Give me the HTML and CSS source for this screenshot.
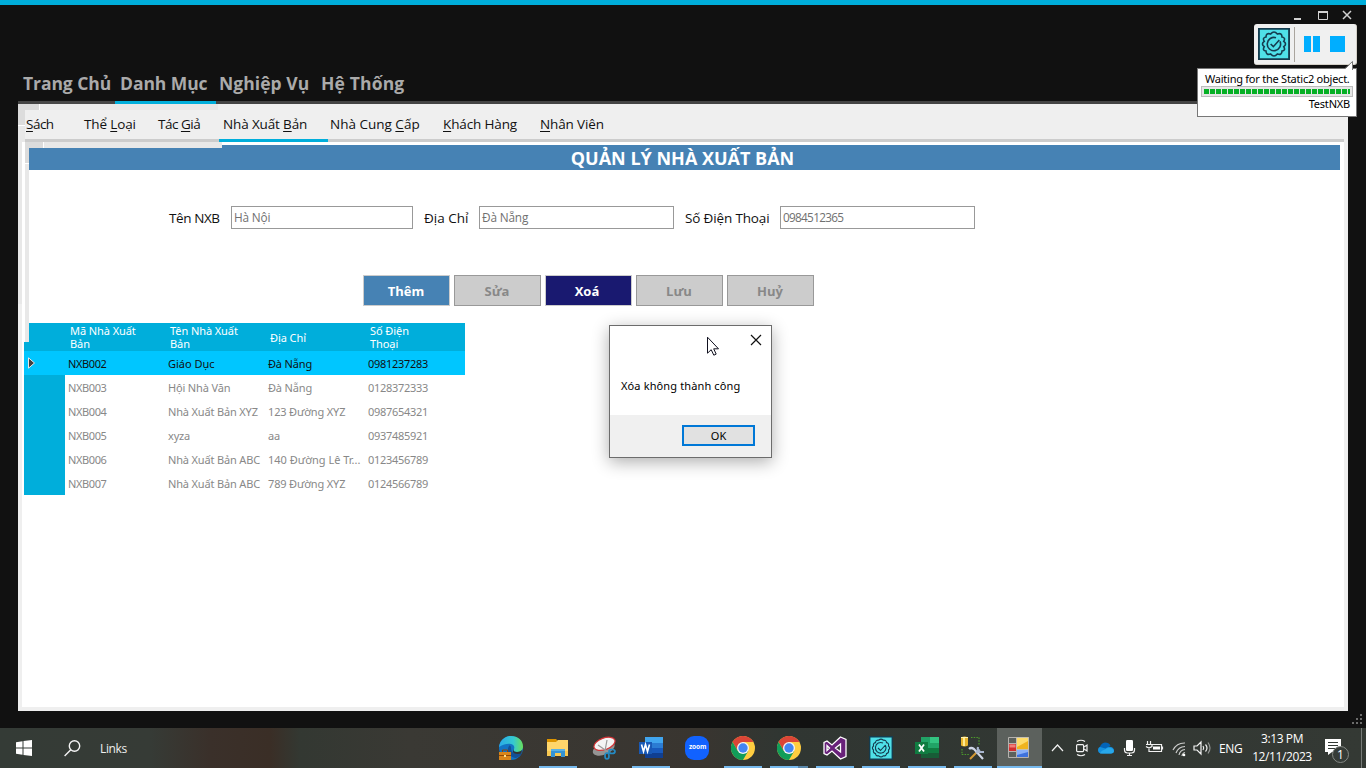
FILE: index.html
```html
<!DOCTYPE html>
<html lang="vi">
<head>
<meta charset="utf-8">
<title>Quản lý nhà xuất bản</title>
<link rel="stylesheet" href="styles.css">
</head>
<body>
<div class="desktop">
  <div class="app">
    <div class="window-controls">
      <svg width="62" height="12" viewBox="0 0 62 12" fill="none" stroke="#d2d2d2">
        <path d="M1 10h7" stroke-width="2"/>
        <path d="M25.500 3v7.500h9V3" stroke-width="1"/><path d="M25 3h10" stroke-width="2"/>
        <path d="M50 2l8 8M58 2l-8 8" stroke-width="1.500"/>
      </svg>
    </div>
    <nav class="main-tabs">
      <span>Trang Chủ</span><span class="on">Danh Mục</span><span class="third">Nghiệp Vụ</span><span class="fourth">Hệ Thống</span>
    </nav>
    <main class="page">
      <div class="ghost ghost-outer"></div>
      <div class="ghost ghost-inner"></div>
      <nav class="sub-tabs">
        <span class="tight"><u>S</u>ách</span><span>Thể <u>L</u>oại</span><span class="tight">Tác <u>G</u>iả</span><span class="on">Nhà Xuất <u>B</u>ản</span><span>Nhà Cung <u>C</u>ấp</span><span><u>K</u>hách Hàng</span><span><u>N</u>hân Viên</span>
      </nav>
      <section class="content">
        <div class="ghost ghost-title"></div>
        <h1><span>QUẢN LÝ NHÀ XUẤT BẢN</span></h1>
        <div class="form">
          <label class="l1">Tên NXB</label><div class="field f1">Hà Nội</div>
          <label class="l2">Địa Chỉ</label><div class="field f2">Đà Nẵng</div>
          <label class="l3">Số Điện Thoại</label><div class="field f3"><span class="phone">0984512365</span></div>
        </div>
        <div class="actions">
          <div class="btn add">Thêm</div><div class="btn">Sửa</div><div class="btn del">Xoá</div><div class="btn">Lưu</div><div class="btn">Huỷ</div>
        </div>
        <div class="grid">
          <div class="row head"><i></i><b>Mã Nhà Xuất<br>Bản</b><b>Tên Nhà Xuất<br>Bản</b><b>Địa Chỉ</b><b>Số Điện<br>Thoại</b></div>
          <div class="row sel"><i><svg width="9" height="13" viewBox="0 0 9 13"><path d="M1.500 .8v10.400L7.500 6z" fill="#414141" stroke="#e8e8e8"/></svg></i><span>NXB002</span><span class="wide">Giáo Dục</span><span>Đà Nẵng</span><span>0981237283</span></div>
          <div class="row"><i></i><span>NXB003</span><span>Hội Nhà Văn</span><span>Đà Nẵng</span><span>0128372333</span></div>
          <div class="row"><i></i><span>NXB004</span><span>Nhà Xuất Bản XYZ</span><span>123 Đường XYZ</span><span>0987654321</span></div>
          <div class="row"><i></i><span>NXB005</span><span>xyza</span><span>aa</span><span>0937485921</span></div>
          <div class="row"><i></i><span>NXB006</span><span>Nhà Xuất Bản ABC</span><span class="full">140 Đường Lê Tr...</span><span>0123456789</span></div>
          <div class="row"><i></i><span>NXB007</span><span>Nhà Xuất Bản ABC</span><span>789 Đường XYZ</span><span>0124566789</span></div>
        </div>
      </section>
    </main>
    <svg class="grip" width="12" height="12" viewBox="0 0 12 12" fill="#6b6b6b"><path d="M8 0h2v2H8zM4 4h2v2H4zM8 4h2v2H8zM0 8h2v2H0zM4 8h2v2H4zM8 8h2v2H8z"/></svg>
  </div>

  <footer class="taskbar">
    <svg class="start" width="16" height="16" viewBox="0 0 16 16" fill="#fff"><path d="M0 2.200L6.500 1.300V7.500H0zM7.500 1.100L16 0V7.500H7.500zM0 8.500H6.500V14.700L0 13.800zM7.500 8.500H16V16L7.500 14.900z"/></svg>
    <svg class="search" width="17" height="17" viewBox="0 0 17 17" fill="none" stroke="#f4f4f4" stroke-width="1.400"><circle cx="10.500" cy="6" r="5.200"/><path d="M6.800 9.700L.6 16"/></svg>
    <span class="links">Links</span>
    <div class="apps">
      <div class="task edge"><svg viewBox="0 0 24 24"><defs><linearGradient id="eg"><stop offset="0" stop-color="#2aa9e8"/><stop offset=".6" stop-color="#35c9d0"/><stop offset="1" stop-color="#69e05a"/></linearGradient></defs><circle cx="12" cy="12" r="12" fill="#1273c4"/><path d="M0 11C1 4 6 0 12 0c7 0 12 4.500 12 10.500 0 4-3 5.500-6 5.500-3 0-4-1-3-3 2-5-6-8-15-2z" fill="url(#eg)"/><path d="M15 13c-1 2 0 3 3 3 2 0 4-1 5-2l-1 5c-3 1-7 0-8-3 0-1 0-2 1-3z" fill="#343330"/><path d="M10 10c-3 5 0 11 7 12 3-1 5-3 6-5-5 2-11 1-11-5 0-2-1-3-2-2z" fill="#145095"/><path d="M0 16h12v8H0z" fill="#d88519"/><path d="M3.500 16v-2h5v2M0 19.500h12" fill="none" stroke="#8d4706"/><path d="M5 19h2v2H5z" fill="#ffe08a"/></svg></div>
      <div class="task run"><svg viewBox="0 0 24 24"><path d="M1 3h9l2 2v3H1z" fill="#dd9400"/><path d="M1 6h9l2-2h10v16H1z" fill="#ffd66b"/><path d="M1 15h21v5H1z" fill="#f8c851"/><path d="M5 21v-8h14v8h-4v-4H9v4z" fill="#3493d4"/><path d="M5 13h14v2H5z" fill="#59b1e5"/></svg></div>
      <div class="task snip"><svg viewBox="0 0 24 24"><ellipse cx="11.500" cy="12.500" rx="11.500" ry="6" transform="rotate(-22 12 12)" fill="#949494"/><ellipse cx="12.500" cy="8" rx="11" ry="5.800" transform="rotate(-20 12 8)" fill="#f4f4f4" stroke="#d43437" stroke-width="1.200"/><path d="M6 9l10 7M15 4l-2 11" stroke="#999" stroke-width="1.200"/><g fill="none" stroke="#238bc5" stroke-width="1.700"><ellipse cx="20" cy="15.500" rx="3" ry="2"/><ellipse cx="15" cy="20" rx="2" ry="3"/></g></svg></div>
      <div class="task run"><svg viewBox="0 0 24 24"><path d="M6 1h18v6H6z" fill="#41a5ee"/><path d="M6 7h18v5H6z" fill="#2b7cd3"/><path d="M6 12h18v5H6z" fill="#185abd"/><path d="M6 17h18v5H6z" fill="#103f91"/><path d="M0 6h13v12H0z" fill="#1959b5"/><path d="M2.500 8.500l2 7 2-7 2 7 2-7" fill="none" stroke="#fff" stroke-width="1.600"/></svg></div>
      <div class="task"><svg viewBox="0 0 24 24"><rect width="24" height="24" rx="9" fill="#1162ff"/></svg><em>zoom</em></div>
      <div class="task run"><svg viewBox="0 0 24 24"><circle cx="12" cy="12" r="12" fill="#ffcd40"/><path d="M1.600 6A12 12 0 0 1 22.400 6H12L6.800 15z" fill="#db4537"/><path d="M1.600 6A12 12 0 0 0 12 24l5.200-9H6.800z" fill="#119d59"/><circle cx="12" cy="12" r="6" fill="#f4f4f4"/><circle cx="12" cy="12" r="4.700" fill="#4385f4"/></svg></div>
      <div class="task run multi"><svg viewBox="0 0 24 24"><circle cx="12" cy="12" r="12" fill="#ffcd40"/><path d="M1.600 6A12 12 0 0 1 22.400 6H12L6.800 15z" fill="#db4537"/><path d="M1.600 6A12 12 0 0 0 12 24l5.200-9H6.800z" fill="#119d59"/><circle cx="12" cy="12" r="6" fill="#f4f4f4"/><circle cx="12" cy="12" r="4.700" fill="#4385f4"/></svg></div>
      <div class="task run"><svg viewBox="0 0 24 24"><path fill-rule="evenodd" d="M17.500 1L23 3.500v17L17.500 23 9 15l-5 4-3-1.500v-11L4 5l5 4zM17.500 8L12.500 12l5 4zM4 9.500v5L6.500 12z" fill="#68217a" stroke="#fff" stroke-width="1.300"/></svg></div>
      <div class="task run"><svg viewBox="0 0 24 24"><path d="M.7.700h22.600v22.600H.7z" fill="#4fe0e8" stroke="#153c4f" stroke-width="1.400"/><g fill="none" stroke="#153c4f" stroke-width="1.100"><path d="M9.800 4.200Q12 2 14.200 4.200 17.300 3.900 17.500 6.600 20.200 7.100 19.500 10 21.700 12 19.500 14 20.200 17 17.500 17.500 17.300 20.200 14.200 19.800 12 22 9.800 19.800 6.700 20.200 6.500 17.500 3.800 17 4.500 14 2.300 12 4.500 10 3.800 7.100 6.500 6.600 6.700 3.900 9.800 4.200z"/><path d="M16.500 9.500A5.300 5.300 0 1 1 14 7M9 12l2.500 2.500 5-5.500"/></g></svg></div>
      <div class="task run"><svg viewBox="0 0 24 24"><path d="M6 1h9v21H6z" fill="#21a366"/><path d="M15 1h9v6h-9z" fill="#33c481"/><path d="M15 7h9v5h-9z" fill="#21a366"/><path d="M6 12h9v5H6z" fill="#107c41"/><path d="M15 12h9v5h-9z" fill="#107c41"/><path d="M6 17h18v5H6z" fill="#185c37"/><path d="M0 6h13v12H0z" fill="#107c41"/><path d="M4 8.500l5 7M9 8.500l-5 7" stroke="#fff" stroke-width="1.800"/></svg></div>
      <div class="task run"><svg viewBox="0 0 24 24"><path d="M0 1.500Q3.500-.5 7 1.500v8q-3.500 2-7 0z" fill="#e9b52c"/><path d="M2 2h2v8H2z" fill="#ffeb93"/><path d="M0 1.500h7" stroke="#fff3b0"/><path d="M10 1.500h8V9M1 13v5.500h7" fill="none" stroke="#4d9a2c" stroke-width="1.200" stroke-dasharray="1.500 1.200"/><path d="M17 15l-8 8" stroke="#d69a35" stroke-width="2"/><path d="M8 13q2-2 5 0l9 10" fill="none" stroke="#cfd6e6" stroke-width="2.200"/><path d="M17 11q-1 4 2 5l4 0M15 17l4-3" fill="none" stroke="#a9b6cf" stroke-width="2.200"/></svg></div>
      <div class="task run current"><svg viewBox="0 0 24 24"><path d="M1.500 1.500h20v20h-20zM9.500 2v20M1 7.500h8M1 15.500h8" fill="none" stroke="#b5b2ae"/><path d="M10 2h11v11H10z" fill="#f0b41f"/><path d="M10 2h11v3L10 11z" fill="#ffdc69"/><path d="M2 8h7v7H2z" fill="#d32e2e"/><path d="M2.500 8.500h6v3h-6z" fill="#ee7f78"/><path d="M10 14h11v7H10z" fill="#3e72dd"/><path d="M10 14h11v2l-11 3z" fill="#88b0fa"/><path d="M9.500 1.500h12v12h-12z" fill="none" stroke="#c5bfb0"/></svg></div>
    </div>
    <div class="tray">
      <svg width="170" height="20" viewBox="0 0 170 20" fill="none" stroke="#f2f2f2" stroke-width="1.200">
        <path d="M1 13l5.500-6L12 13"/>
        <rect x="25.600" y="6.600" width="7" height="7" rx="1"/><path d="M33 9l3-2v6l-3-2M26 3.500q4-2.500 8 0M26 16.500q4 2.500 8 0"/>
        <g stroke="none"><path d="M47 12q0-3 3-3.500l5-.5 5 1q3 1 3 3.500 0 3-3 3H51q-4 0-4-3.500z" fill="#1490df"/><path d="M49 9q1-4 5-4.500 4 0 5.500 3l-5 3z" fill="#0364b8"/><path d="M49 15.500q1-3 5-4 3-3 7-1c3 2 2 5-1 5z" fill="#28a8ea"/><rect x="75" y="2" width="7" height="11" rx="1.200" fill="#fff"/></g><path d="M73.500 10v2q0 3 3 3h4q3 0 3-3v-2M78.500 15v3M76 17.500h5"/>
        <path d="M101 6.500h9.500v7h-11M96.500 3v3M99.500 3v3M95 6.500h6v2q-3 2.500-6 0M98 10.500v3h2M111.500 8.500v3"/><path d="M102 8.500h7v3h-7z" fill="#fff" stroke="none"/>
        <path d="M122 12A13 13 0 0 1 134 5M125 15A10 10 0 0 1 134 8.500M128 17A7 7 0 0 1 134 11.500M131 18A4 4 0 0 1 134 14.500" opacity=".8"/><circle cx="133" cy="17" r="1.300" fill="#fff" stroke="none"/>
        <path d="M143 8h3l4-4v12l-4-4h-3zM152 8q1.500 2 0 4M154.500 6.500q3 3.500 0 7"/><path d="M157 4.500q4 5.500 0 11" opacity=".5"/>
      </svg>
      <span class="lang">ENG</span>
      <div class="clock"><span>3:13 PM</span><span class="date">12/11/2023</span></div>
      <svg class="notice" width="26" height="26" viewBox="0 0 26 26"><path d="M1 2h16v13h-9l-4 3v-3H1z" fill="#fff"/><path d="M4 5.500h10M4 8.500h10M4 11.500h7" stroke="#333a35"/><circle cx="16.500" cy="17.500" r="8" fill="#363c38" stroke="#858985"/></svg><em class="count">1</em>
    </div>
  </footer>

  <div class="dialog">
    <svg class="close" width="12" height="12" viewBox="0 0 12 12" stroke="#111" stroke-width="1.200"><path d="M1 1l10 10M11 1L1 11"/></svg>
    <div class="message"><span>Xóa không thành công</span></div>
    <div class="dialog-foot"><div class="ok">OK</div></div>
  </div>
  <svg class="cursor" width="14" height="21" viewBox="0 0 14 21"><path d="M1.500 1.200v16l3.700-3.500 2.600 5.500 2.400-1.100-2.500-5.300h4.800z" fill="#fff" stroke="#11111f"/></svg>

  <div class="recorder">
    <svg class="badge" width="32" height="32" viewBox="0 0 24 24"><path d="M.7.700h22.600v22.600H.7z" fill="#4fe0e8" stroke="#153c4f" stroke-width="1.400"/><g fill="none" stroke="#153c4f" stroke-width="1.200"><path d="M9.500 4.500Q12 1.500 14.500 4.500 18 3.300 18 6.800 21 7.300 19.300 10 22 12 19.300 14 21 17 18 17.200 18 20.700 14.500 19.500 12 22.500 9.500 19.500 6 20.700 6 17.200 3 17 4.700 14 2 12 4.700 10 3 7.300 6 6.800 6 3.300 9.500 4.500z"/><path d="M16.500 10A5 5 0 1 1 13.500 7.300M9.500 12l2 2 4.500-5"/></g></svg>
    <div class="rec-sep"></div>
    <div class="pause"><i></i><i></i></div><div class="stop"></div>
  </div>
  <div class="tip">
    <svg class="tail" width="9" height="9" viewBox="0 0 9 9"><path d="M0 8L7.500 1V9H0z" fill="#fff"/><path d="M0 7.500L7.500.5V9" fill="none" stroke="#777"/></svg>
    <span class="tip-line">Waiting for the Static2 object.</span>
    <div class="progress"><i></i></div>
    <span class="tip-name">TestNXB</span>
  </div>
</div>
</body>
</html>
```
FILE: styles.css
```css
* { box-sizing: border-box; }
body { margin: 0; overflow: hidden; font-family: "Open Sans", "Noto Sans", sans-serif; }
i, em { font-style: normal; }
svg { display: block; flex: none; }
.desktop { position: relative; width: 1366px; height: 768px; white-space: nowrap; }
.app { position: relative; height: 728px; background: #111; border-top: 5px solid #00aedb; padding: 0 18px; }
.window-controls { height: 66px; padding: 4px 0 0 1275px; }
.main-tabs { height: 33px; border-bottom: 3px solid #444; display: grid; grid-template-columns: 97px 101px 100px 90px; color: #aaa; font-size: 17.500px; font-weight: 700; letter-spacing: -.07px; line-height: 25px; }
.main-tabs span { padding-left: 5px; height: 33px; }
.main-tabs .third { padding-left: 3px; letter-spacing: .05px; }
.main-tabs .fourth { letter-spacing: .15px; }
.main-tabs .on { border-bottom: 3px solid #00aedb; }
.page { position: relative; height: 607px; padding: 6px 4px 4px; background: #efefef; }
.ghost { position: absolute; background: #e8e8e8; }
.ghost::before { content: ""; position: absolute; left: 0; top: 0; width: 21px; height: 21px; background: #dcdcdc; border-right: 1px solid #fff; border-bottom: 1px solid #fff; }
.ghost-outer { left: 0; top: 0; width: 200px; height: 6px; }
.ghost-inner { left: 0; top: 6px; width: 7px; height: 194px; }
.ghost-inner::before { width: 7px; height: 15px; border-right: 0; }
.ghost-title { left: 3px; top: 0; width: 197px; height: 6px; }
.ghost-title::before { width: 18px; height: 21px; }
.sub-tabs { position: relative; height: 32px; margin: 0 0 0 3px; padding-left: 1px; border-bottom: 3px solid #ccc; display: grid; grid-template-columns: 58px 74px 61px 109px 115px 97px 70px; background: #efefef; color: #111; font-size: 13.500px; letter-spacing: -.14px; line-height: 28px; }
.sub-tabs span { height: 32px; }
.sub-tabs .tight { letter-spacing: -.5px; }
.sub-tabs .on { border-bottom: 3px solid #00aedb; padding-left: 4px; }
.sub-tabs .on + span { padding-left: 2px; letter-spacing: 0; }
.sub-tabs u { text-underline-offset: 2px; text-decoration-thickness: 1px; }
.content { position: relative; height: 565px; padding-top: 3px; background: #fff; }
.content::before { content: ""; position: absolute; left: 3px; top: 0; width: 4px; height: 200px; background: #e8e8e8; }
h1 { position: relative; margin: 0 4px 0 7px; height: 25px; background: #4682b4; color: #fff; font-size: 18px; line-height: 26px; padding-right: 4px; text-align: center; clip-path: polygon(0 3px, 193px 3px, 193px 0, 100% 0, 100% 100%, 0 100%); }
.form { display: flex; align-items: center; height: 24px; margin: 35px 0 0 147px; color: #111; font-size: 13.500px; letter-spacing: -.15px; }
.form label { padding-top: 1px; }
.l1 { width: 51px; letter-spacing: -.4px; } .l2 { width: 44px; letter-spacing: 0; } .l3 { width: 84px; }
.field { height: 23px; border: 1px solid #999; margin: 0 11px; padding-left: 2px; color: #707070; font-size: 11.800px; line-height: 20px; }
.phone { letter-spacing: -.72px; }
.f1 { width: 182px; } .f2, .f3 { width: 195px; }
.actions { display: flex; gap: 4px; margin: 46px 0 0 341px; }
.btn { width: 87px; height: 31px; border: 1px solid #999; background: #ccc; color: #888; font-size: 13px; font-weight: 700; line-height: 30px; text-align: center; padding-right: 1px; }
.add { background: #4682b4; border-color: #ccc; color: #fff; }
.del { background: #191970; border-color: #ccc; color: #fff; padding-right: 3px; }
.grid { position: relative; width: 441px; height: 172px; overflow: hidden; margin: 17px 0 0 2px; font: 11px "Noto Sans", sans-serif; letter-spacing: -.16px; color: #888; }
.row { display: grid; grid-template-columns: 41px repeat(4, 100px); height: 24px; line-height: 24px; }
.row span { padding-left: 3px; padding-top: .5px; }
.row span:last-child { letter-spacing: -.29px; }
.row span:nth-child(2) { letter-spacing: -.4px; }
.row .wide, .row .full { letter-spacing: 0; }
.row i { background: #00aedb; padding: 6px 0 0 3px; }
.row.head { height: 28px; background: #00aedb; color: #fff; line-height: 13px; align-items: center; clip-path: polygon(5px 0, 100% 0, 100% 100%, 0 100%, 0 19px, 5px 19px); letter-spacing: -.08px; }
.head b { font-weight: 400; padding: 0 0 0 5px; }
.sel, .sel i { background: #00c6ff; color: #111; }
.grip { position: absolute; left: 1352px; top: 709px; }
.taskbar { height: 40px; display: flex; align-items: center; color: #eee; background: linear-gradient(90deg, #343b36 0, #363b36 150px, #3a302a 210px, #3a2e26 270px, #333832 300px, #3a3934 410px, #393530 700px, #303632 780px, #343934 100%); }
.start { margin-left: 16px; }
.search { margin-left: 32px; }
.links { margin-left: 19px; width: 390px; font-size: 12px; letter-spacing: -.35px; }
.apps { display: flex; height: 40px; }
.task { position: relative; width: 46px; padding: 8px 0 0 10px; height: 40px; }
.task svg { width: 24px; height: 24px; }
.snip { width: 47px; }
.edge svg { margin-left: -1px; }
.run::after { content: ""; position: absolute; left: 3px; bottom: 0; width: 38px; height: 2px; background: #76b9ed; }
.multi::after { background: linear-gradient(90deg, #76b9ed 28px, #5a88ab 28px); }
.task em { position: absolute; left: 14px; top: 14px; width: 17px; color: #fff; font: 700 6.500px/10px "Open Sans"; letter-spacing: -.1px; }
.current { background: #5c615d; width: 45px; }
.current::after { left: 0; width: 45px; }
.tray { position: relative; display: flex; align-items: center; height: 40px; width: 324px; padding-left: 9px; color: #fff; font-size: 12px; }
.lang { margin-left: -2px; width: 30px; letter-spacing: -.4px; }
.clock { display: flex; flex-direction: column; align-items: center; width: 64px; margin-left: 1px; line-height: 18px; }
.clock span { letter-spacing: -.4px; }
.notice { margin: 4px 0 0 10px; }
.count { position: absolute; left: 295px; top: 17px; font-size: 12px; line-height: 20px; }
.tray::after { content: ""; position: absolute; left: 319px; top: 0; height: 40px; width: 1px; background: #777b78; }
.dialog { position: absolute; left: 609px; top: 325px; width: 163px; height: 133px; background: #fff; border: 1px solid #6c6c6c; box-shadow: 0 4px 16px rgba(0,0,0,.32); font: 11px "Noto Sans", sans-serif; color: #000; }
.close { margin: 8px 0 0 140px; }
.message { height: 69px; padding: 32px 0 0 11px; line-height: 16px; letter-spacing: .13px; }
.dialog-foot { height: 42px; padding: 10px 16px 0 72px; background: #f0f0f0; }
.ok { height: 21px; border: 2px solid #0078d7; background: #e1e1e1; line-height: 18px; text-align: center; }
.cursor { position: absolute; left: 706px; top: 336px; }
.recorder { position: absolute; left: 1254px; top: 24px; width: 103px; height: 41px; padding: 4px; border: 1px solid #d4d0c8; border-width: 0 1px 1px 0; border-radius: 3px; background: #f0f0f0; display: flex; }
.rec-sep { width: 1px; height: 35px; margin: -1px 0 0 4px; background: #aaa59e; }
.pause { display: flex; gap: 2px; margin: 8px 0 0 9px; }
.pause i, .stop { width: 7px; height: 16px; background: #00aeff; }
.stop { width: 15px; margin: 8px 0 0 10px; }
.tip { position: absolute; left: 1197px; top: 68px; width: 160px; height: 49px; border: 1px solid #777; background: #fff; color: #000; font: 11px/13px "Noto Sans", sans-serif; padding: 3px 3px 0 3px; display: flex; flex-direction: column; }
.tail { position: absolute; left: 147px; top: -8px; }
.tip-line { height: 14px; padding-left: 4px; letter-spacing: -.24px; }
.progress { height: 11px; border: 1px solid #bcbcbc; background: #e6e6e6; padding: 2px; }
.progress i { display: block; height: 5px; background: repeating-linear-gradient(90deg, #06b025 0 5px, #e6e6e6 5px 6px); }
.tip-name { align-self: flex-end; padding: 0 3px 0 0; letter-spacing: -.2px; }
```
